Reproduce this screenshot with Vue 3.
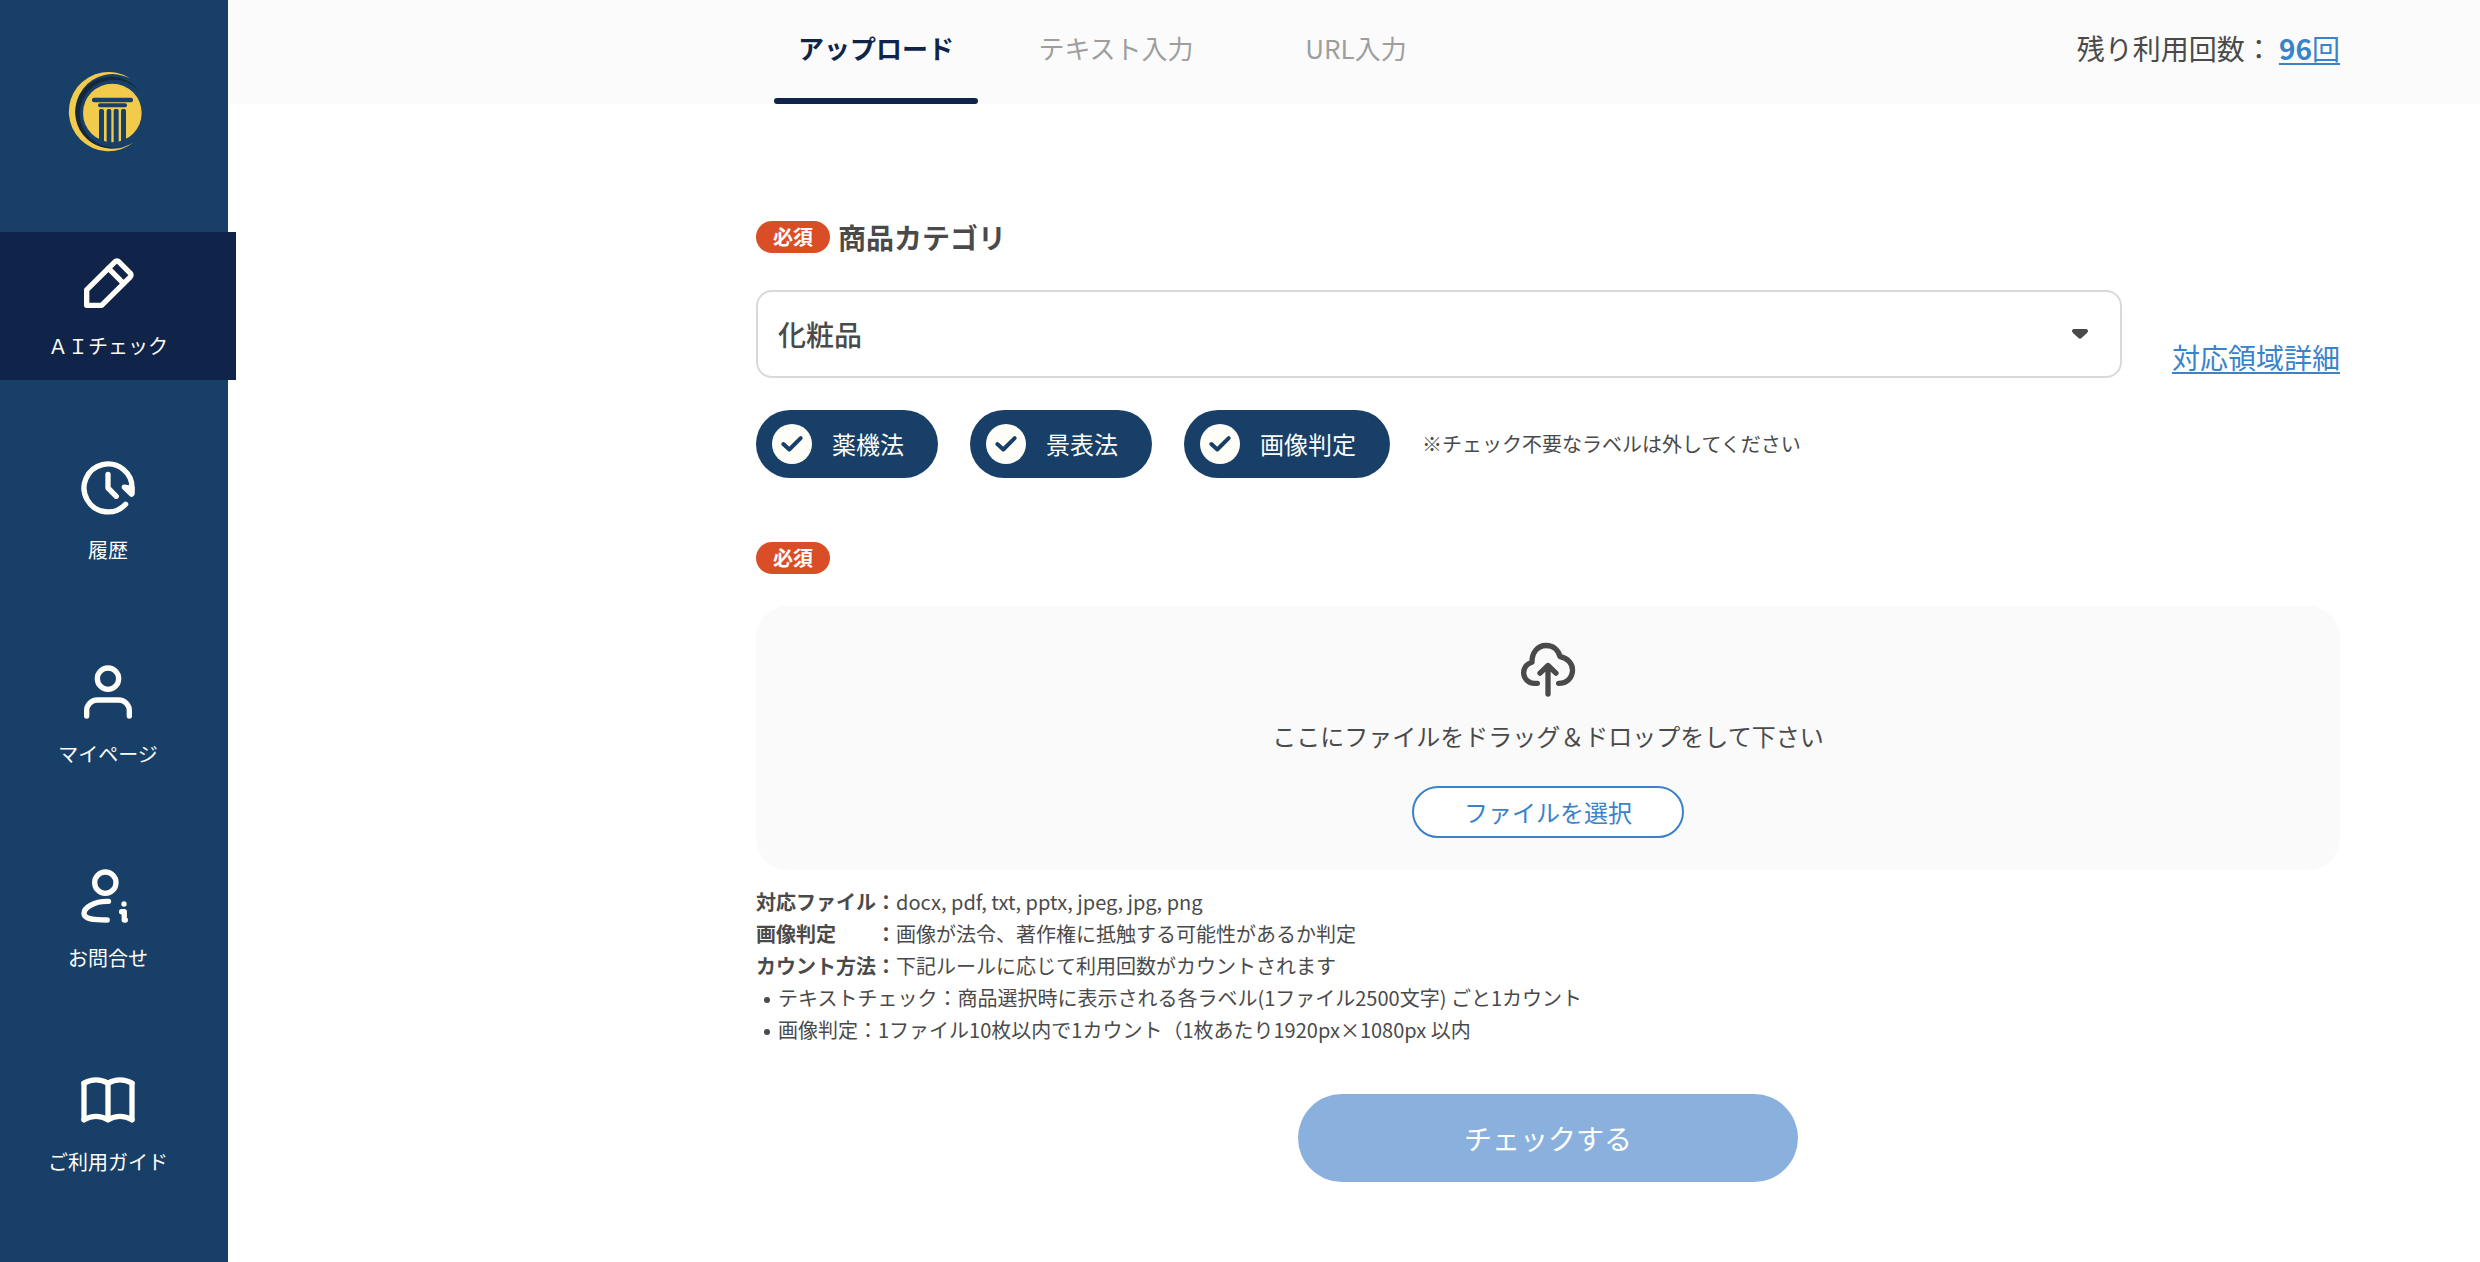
<script setup>
import { ref } from 'vue'

const navItems = [
  {
    label: 'ＡＩチェック',
    active: true,
    paths: [
      'M4 20h5.6L20.3 9.4a1 1 0 0 0 0-1.5l-4.2-4.2a1 1 0 0 0-1.5 0L4 14.2z',
      'M12.2 6.1l5.6 5.7',
    ],
  },
  {
    label: '履歴',
    paths: [
      'M18.6 18.1A9 9 0 1 1 21 12.5v1.6',
      'M12 6.9V12l3.1 3.1',
    ],
    solid: 'M18.1 11.7l2.7 2.6.2-2.2z',
  },
  {
    label: 'マイページ',
    paths: [
      'M12 3a4 4 0 1 1 0 8a4 4 0 1 1 0-8z',
      'M4 21v-2a4 4 0 0 1 4-4h8a4 4 0 0 1 4 4v2',
    ],
  },
  {
    label: 'お問合せ',
    paths: [
      'M11 3a4 4 0 1 1 0 8a4 4 0 1 1 0-8z',
      'M12.2 14h-.7C7 14 3 16.2 3 18.5S6.5 21 11.7 21',
      'M18 15v.01',
      'M17.1 17.9h1v3.1h.4',
    ],
  },
  {
    label: 'ご利用ガイド',
    paths: [
      'M3 19.4a9 9 0 0 1 9 0a9 9 0 0 1 9 0',
      'M3 5.7a9 9 0 0 1 9 0a9 9 0 0 1 9 0',
      'M3 5.7v13.7M12 5.7v13.7M21 5.7v13.7',
    ],
  },
]

const tabs = ['アップロード', 'テキスト入力', 'URL入力']
const activeTab = ref(0)

const category = ref('化粧品')
const checks = ref([
  { label: '薬機法', on: true },
  { label: '景表法', on: true },
  { label: '画像判定', on: true },
])
</script>

<template>
  <div class="page">
    <aside class="sidebar">
      <a class="logo" href="#" aria-label="ホーム">
        <svg viewBox="204 216 222 240" width="74" height="80">
          <path fill="#f2cb4c" d="M390 235A119 119 0 1 0 401 427A112 112 0 1 1 390 235z" />
          <path fill="#14283a" d="M423 280A107 107 0 1 0 355 442A102 102 0 1 1 423 280z" />
          <circle fill="#f2cb4c" cx="337" cy="339" r="88" />
          <g fill="#183f68">
            <rect x="276" y="293" width="123" height="14" rx="6" />
            <rect x="294" y="310" width="87" height="12" rx="6" />
            <rect x="297" y="327" width="15" height="102" rx="5" />
            <rect x="320" y="327" width="14" height="104" rx="5" />
            <rect x="341" y="327" width="15" height="104" rx="5" />
            <rect x="363" y="327" width="15" height="102" rx="5" />
          </g>
        </svg>
      </a>
      <nav class="nav">
        <a
          v-for="item in navItems"
          :key="item.label"
          href="#"
          class="nav-item"
          :class="{ active: item.active }"
        >
          <svg class="line-icon" viewBox="0 0 24 24" width="64" height="64">
            <path v-for="d in item.paths" :key="d" :d="d" />
            <path v-if="item.solid" class="solid" :d="item.solid" />
          </svg>
          <span>{{ item.label }}</span>
        </a>
      </nav>
    </aside>

    <div class="body">
      <header class="topbar">
        <div class="tabs" role="tablist">
          <button
            v-for="(tab, i) in tabs"
            :key="tab"
            type="button"
            role="tab"
            class="tab"
            :class="{ active: i === activeTab }"
            :aria-selected="i === activeTab"
            @click="activeTab = i"
          >
            {{ tab }}
          </button>
        </div>
        <p class="quota">残り利用回数： <a href="#"><b>96</b>回</a></p>
      </header>

      <main class="content">
        <div class="heading">
          <span class="badge">必須</span>
          <label class="title" for="category">商品カテゴリ</label>
        </div>

        <div class="category-row">
          <div class="select">
            <select id="category" v-model="category">
              <option>化粧品</option>
            </select>
            <svg class="caret" viewBox="0 0 16 10" width="16" height="10">
              <path d="M2 0h12q2 0 2 2 0 1-1 2L9.500 9q-1.500 1.500-3 0L1 4Q0 3 0 2 0 0 2 0z" />
            </svg>
          </div>
          <a class="detail" href="#">対応領域詳細</a>
        </div>

        <div class="chips">
          <label v-for="c in checks" :key="c.label" class="chip">
            <span class="tick">
              <input v-model="c.on" type="checkbox" />
              <svg v-if="c.on" viewBox="0 0 40 40" width="40" height="40">
                <path d="M11.300 20l6 5.500L28.700 14.200" />
              </svg>
            </span>
            {{ c.label }}
          </label>
          <span class="hint">※チェック不要なラベルは外してください</span>
        </div>

        <span class="badge">必須</span>

        <section class="dropzone">
          <svg class="line-icon" viewBox="0 0 24 24" width="64" height="64">
            <path d="M8 17H7a4 4 0 0 1-1-7.9C5.900 5.600 8 2.800 11.300 2.800c2.600 0 4.600 1.600 5.200 4.200C19.400 7.500 21.200 9.600 21.200 12c0 2.900-2.100 5-5.200 5" />
            <path d="M12 21V10.500M9 13.200l3-2.900 3 2.900" />
          </svg>
          <p>ここにファイルをドラッグ＆ドロップをして下さい</p>
          <button type="button" class="pick">ファイルを選択</button>
        </section>

        <div class="notes">
          <p><b>対応ファイル：</b>docx, pdf, txt, pptx, jpeg, jpg, png</p>
          <p><b>画像判定　　：</b>画像が法令、著作権に抵触する可能性があるか判定</p>
          <p><b>カウント方法：</b>下記ルールに応じて利用回数がカウントされます</p>
          <ul>
            <li>テキストチェック：商品選択時に表示される各ラベル(1ファイル2500文字) ごと1カウント</li>
            <li>画像判定：1ファイル10枚以内で1カウント（1枚あたり1920px×1080px 以内</li>
          </ul>
        </div>

        <button type="button" class="submit">チェックする</button>
      </main>
    </div>
  </div>
</template>

<style>
body {
  background: #fff;
}
</style>

<style scoped>
.page {
  display: flex;
  min-height: 100vh;
  color: #4a4a4a;
  font-family: "Noto Sans CJK JP", sans-serif;
  font-size: 20px;
  line-height: 32px;
}

.page *,
.page {
  box-sizing: border-box;
}

p,
ul {
  margin: 0;
  padding: 0;
}

button,
select {
  font-family: inherit;
  color: inherit;
}

button {
  padding: 0;
  border: 0;
  cursor: pointer;
}

svg {
  display: block;
}

.line-icon {
  fill: none;
  stroke: currentColor;
  stroke-width: 2;
  stroke-linecap: round;
  stroke-linejoin: round;
}

.line-icon .solid {
  fill: currentColor;
}

.sidebar {
  flex: none;
  width: 228px;
  padding-top: 72px;
  background: #183f68;
}

.logo {
  display: block;
  width: 74px;
  margin: 0 0 80px 68px;
}

.nav {
  display: flex;
  flex-direction: column;
  gap: 56px;
  width: 236px;
}

.nav-item {
  display: flex;
  flex-direction: column;
  align-items: center;
  gap: 16px;
  padding: 20px 20px 20px 0;
  color: #fffdf7;
  line-height: 28px;
  text-decoration: none;
}

.nav-item.active {
  background: #10244a;
}

.body {
  flex: 1;
  min-width: 0;
}

.topbar {
  display: flex;
  justify-content: space-between;
  height: 104px;
  padding: 0 140px 0 546px;
  background: #fbfbfb;
}

.tabs {
  display: flex;
  gap: 36px;
}

.tab {
  display: flex;
  flex-direction: column;
  align-items: center;
  justify-content: space-between;
  width: 204px;
  background: none;
  color: #9e9e9e;
  font-size: 26px;
  line-height: 96px;
}

.tab::after {
  content: "";
  width: 100%;
  height: 6px;
  border-radius: 3px;
}

.tab.active {
  color: #10244a;
  font-weight: 700;
}

.tab.active::after {
  background: #10244a;
}

.quota {
  font-size: 28px;
  line-height: 96px;
}

a {
  color: #3a82ca;
  text-underline-offset: 3px;
  text-decoration-thickness: 2px;
}

.content {
  display: flex;
  flex-direction: column;
  align-items: flex-start;
  padding: 112px 140px 80px 528px;
}

.heading {
  display: flex;
  align-items: center;
  gap: 8px;
  height: 42px;
}

.badge {
  padding: 0 17px;
  border-radius: 16px;
  background: #d94d27;
  color: #fff;
  font-weight: 700;
}

.title {
  font-size: 28px;
  font-weight: 700;
}

.category-row {
  display: flex;
  align-items: flex-end;
  gap: 50px;
  width: 100%;
  margin: 32px 0;
}

.select {
  display: grid;
  flex: 1;
  align-items: center;
}

.select > * {
  grid-area: 1 / 1;
}

.select select {
  width: 100%;
  height: 88px;
  padding: 0 60px 0 20px;
  border: 2px solid #d9d9d9;
  border-radius: 16px;
  background: #fff;
  font-size: 28px;
  font-weight: 500;
  appearance: none;
}

.caret {
  justify-self: end;
  margin-right: 34px;
  fill: #4a4a4a;
  pointer-events: none;
}

.detail {
  font-size: 28px;
  line-height: 42px;
}

.chips {
  display: flex;
  align-items: center;
  gap: 32px;
  margin-bottom: 64px;
}

.chip {
  display: flex;
  align-items: center;
  gap: 20px;
  height: 68px;
  padding: 0 34px 0 16px;
  border-radius: 34px;
  background: #183f68;
  color: #fffdf7;
  font-size: 24px;
  cursor: pointer;
}

.tick {
  display: grid;
}

.tick > * {
  grid-area: 1 / 1;
}

.tick input {
  width: 40px;
  height: 40px;
  margin: 0;
  border-radius: 50%;
  background: #fffdf7;
  appearance: none;
}

.tick svg {
  fill: none;
  stroke: #183f68;
  stroke-width: 4;
  stroke-linecap: round;
  stroke-linejoin: round;
  pointer-events: none;
}

.dropzone {
  display: flex;
  flex-direction: column;
  align-items: center;
  width: 100%;
  margin: 32px 0 16px;
  padding: 32px;
  border-radius: 32px;
  background: #fafafa;
}

.dropzone p {
  margin: 16px 0 32px;
  font-size: 24px;
  line-height: 36px;
}

.pick {
  width: 272px;
  height: 52px;
  padding-bottom: 2px;
  border: 2px solid #3a82ca;
  border-radius: 26px;
  background: #fff;
  color: #3a82ca;
  font-size: 24px;
}

.notes li {
  display: flex;
  align-items: center;
}

.notes li::before {
  content: "";
  flex: none;
  width: 6px;
  height: 6px;
  margin: 4px 8px 0;
  border-radius: 50%;
  background: #4a4a4a;
}

.submit {
  align-self: center;
  width: 500px;
  height: 88px;
  margin-top: 48px;
  border-radius: 44px;
  background: #8ab1dd;
  color: #fff;
  font-size: 28px;
}
</style>
